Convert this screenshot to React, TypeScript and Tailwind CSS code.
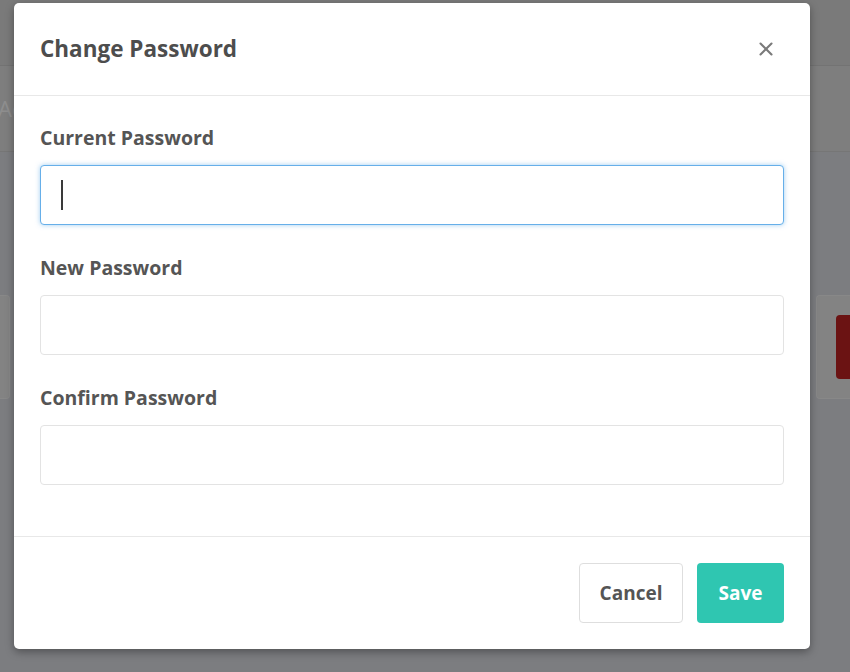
import { X } from "lucide-react";

const FIELDS = [
  { id: "current", label: "Current Password", focused: true },
  { id: "new", label: "New Password", focused: false },
  { id: "confirm", label: "Confirm Password", focused: false },
];

function FakeInput({ focused }: { focused: boolean }) {
  return (
    <div
      className={
        focused
          ? "flex h-[60px] items-center rounded-[4px] border border-[#66afe9] bg-white pl-[20px] shadow-[0_0_5px_rgba(102,175,233,0.6)]"
          : "flex h-[60px] items-center rounded-[4px] border border-[#e3e3e3] bg-white pl-[20px]"
      }
    >
      {focused && <span className="h-[30px] w-[2px] bg-[#3a3a3a]" />}
    </div>
  );
}

export default function App() {
  return (
    <div className="relative h-[672px] w-[850px] overflow-hidden bg-[#7c7d80] font-['Open_Sans',sans-serif]">
      {/* dimmed page behind the modal */}
      <div className="h-[66px] border-b border-[#737373] bg-[#7a7a7a]" />
      <div className="flex h-[86px] items-center border-b border-[#767676] bg-[#7e7e7e]">
        <span className="-ml-[2px] text-[22px] text-[#8e8e8e]">Ac</span>
      </div>
      <div className="flex justify-between pt-[143px]">
        <div className="h-[104px] w-[10px] rounded-r-[4px] border border-l-0 border-[#888] bg-[#838383]" />
        <div className="flex h-[104px] w-[34px] items-center rounded-l-[4px] border border-r-0 border-[#888] bg-[#838383] pl-[19px]">
          <div className="h-[64px] w-full rounded-l-[4px] bg-[#6b1313]" />
        </div>
      </div>

      {/* modal */}
      <div className="absolute left-[14px] top-[3px] w-[796px] rounded-[5px] bg-white shadow-[0_3px_9px_rgba(0,0,0,0.35)]">
        <div className="flex h-[93px] items-center justify-between border-b border-[#e8e8e8] pl-[26px] pr-[33px]">
          <h4 className="text-[22.5px] font-bold text-[#4d4d4d]">Change Password</h4>
          <X className="h-[22px] w-[22px] text-[#7a7a7a]" strokeWidth={2.3} />
        </div>

        <div className="px-[26px] pb-[22px] pt-[28px]">
          {FIELDS.map((f) => (
            <div key={f.id} className="mb-[29px]">
              <label className="mb-[13px] block h-[28px] text-[19.5px] font-bold leading-[28px] text-[#555]">
                {f.label}
              </label>
              <FakeInput focused={f.focused} />
            </div>
          ))}
        </div>

        <div className="flex justify-end gap-[14px] border-t border-[#e8e8e8] px-[26px] pb-[26px] pt-[26px]">
          <button className="h-[60px] w-[104px] rounded-[4px] border border-[#dedede] bg-white text-[19px] font-bold text-[#555]">
            Cancel
          </button>
          <button className="h-[60px] w-[87px] rounded-[4px] bg-[#2fc6b1] text-[19px] font-bold text-white">
            Save
          </button>
        </div>
      </div>
    </div>
  );
}
